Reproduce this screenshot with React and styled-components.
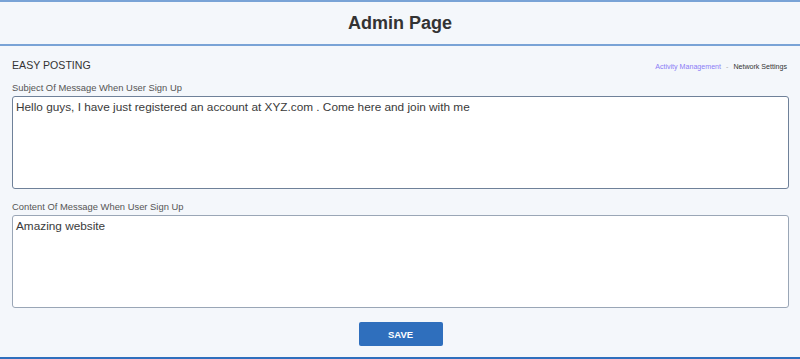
import React from "react";
import styled, { createGlobalStyle } from "styled-components";

const Global = createGlobalStyle`
  html, body { margin: 0; padding: 0; background: #f4f7fb; }
  body { font-family: "Liberation Sans", Arial, sans-serif; }
  * { box-sizing: border-box; }
`;

const Page = styled.div`
  width: 800px;
  height: 359px;
  display: flex;
  flex-direction: column;
  background: #f4f7fb;
`;

const Header = styled.header`
  height: 46px;
  border-top: 2px solid #79a3d6;
  border-bottom: 2px solid #79a3d6;
  display: flex;
  align-items: center;
  justify-content: center;
  background: #f4f7fb;
`;

const Title = styled.h1`
  margin: 0;
  font-size: 18px;
  font-weight: 700;
  color: #333;
`;

const Panel = styled.main`
  flex: 1;
  border-bottom: 2px solid #2f6fbd;
  padding: 12px 11px 0 12px;
  display: flex;
  flex-direction: column;
`;

const TopRow = styled.div`
  display: flex;
  justify-content: space-between;
  align-items: center;
  height: 14px;
  margin-bottom: 10px;
`;

const Heading = styled.h2`
  margin: 0;
  font-size: 10.6px;
  font-weight: 400;
  color: #333;
  text-transform: uppercase;
`;

const Crumbs = styled.nav`
  display: flex;
  align-items: center;
  gap: 5px;
  font-size: 7.1px;
  padding-top: 4px;
  padding-right: 2px;
`;

const Crumb = styled.a`
  color: ${(p) => (p.$active ? "#333" : "#8b7cf6")};
  text-decoration: none;
`;

const Sep = styled.span`
  color: #aaa;
`;

const Label = styled.label`
  display: block;
  font-size: 9.4px;
  color: #555;
  margin-bottom: 3px;
`;

const Field = styled.div`
  display: flex;
  flex-direction: column;
  margin-bottom: 12px;
`;

const Area = styled.textarea`
  width: 777px;
  height: 93px;
  resize: none;
  border: 1px solid ${(p) => p.$border};
  border-radius: 3px;
  background: #fff;
  padding: 3px 3px;
  font-family: "Liberation Sans", Arial, sans-serif;
  font-size: 11.8px;
  color: #3a3a3a;
  outline: none;
`;

const Actions = styled.div`
  display: flex;
  justify-content: center;
  padding-top: 2px;
`;

const SaveButton = styled.button`
  width: 84px;
  height: 24px;
  border: none;
  border-radius: 2px;
  background: #2f6fbd;
  color: #fff;
  font-family: "Liberation Sans", Arial, sans-serif;
  font-weight: 700;
  font-size: 9.5px;
`;

export default function App() {
  return (
    <>
      <Global />
      <Page>
        <Header>
          <Title>Admin Page</Title>
        </Header>
        <Panel>
          <TopRow>
            <Heading>Easy Posting</Heading>
            <Crumbs>
              <Crumb href="#">Activity Management</Crumb>
              <Sep>-</Sep>
              <Crumb $active>Network Settings</Crumb>
            </Crumbs>
          </TopRow>
          <Field>
            <Label>Subject Of Message When User Sign Up</Label>
            <Area
              $border="#6f8199"
              defaultValue="Hello guys, I have just registered an account at XYZ.com . Come here and join with me"
            />
          </Field>
          <Field>
            <Label>Content Of Message When User Sign Up</Label>
            <Area $border="#9aa6b6" defaultValue="Amazing website" />
          </Field>
          <Actions>
            <SaveButton>SAVE</SaveButton>
          </Actions>
        </Panel>
      </Page>
    </>
  );
}
